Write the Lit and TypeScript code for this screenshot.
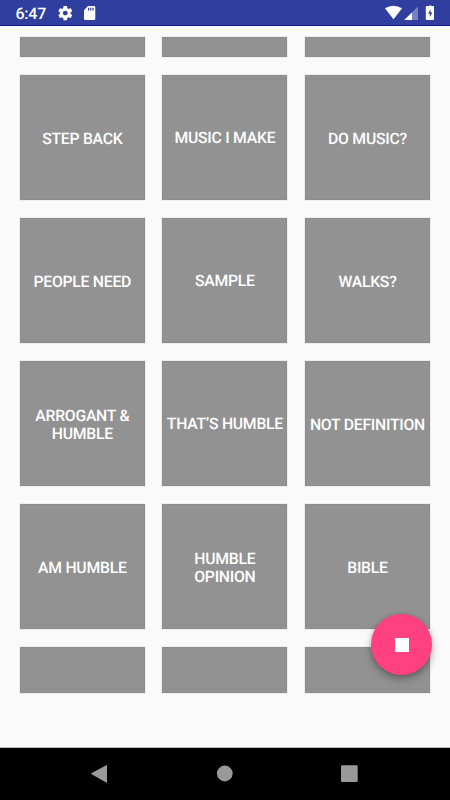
import { LitElement, html, css } from "lit";
import { customElement } from "lit/decorators.js";

const PADS = [
  ["STEP BACK", "MUSIC I MAKE", "DO MUSIC?"],
  ["PEOPLE NEED", "SAMPLE", "WALKS?"],
  ["ARROGANT & HUMBLE", "THAT’S HUMBLE", "NOT DEFINITION"],
  ["AM HUMBLE", "HUMBLE OPINION", "BIBLE"],
];

@customElement("status-bar")
class StatusBar extends LitElement {
  static styles = css`
    :host {
      display: flex;
      box-sizing: border-box;
      height: 26px;
      flex: none;
      background: #303f9f;
      border-bottom: 1px solid #0d1486;
      color: #fff;
      font: 500 16px/26px Roboto, sans-serif;
      letter-spacing: -0.25px;
      text-rendering: geometricPrecision;
      padding: 0 14px 0 15.500px;
      justify-content: space-between;
    }
    .group { display: flex; height: 26px; }
    .time { width: 41.500px; padding-top: 1px; white-space: nowrap; }
    svg { display: block; fill: #fff; }
  `;
  render() {
    return html`
      <div class="group">
        <span class="time">6:47</span>
        <svg width="40" height="26" viewBox="57 0 40 26">
          <path
            transform="translate(56.75 4.6) scale(.71)"
            d="M19.43 12.98c.04-.32.07-.64.07-.98s-.03-.66-.07-.98l2.11-1.65c.19-.15.24-.42.12-.64l-2-3.46c-.12-.22-.39-.3-.61-.22l-2.49 1c-.52-.4-1.08-.73-1.69-.98l-.38-2.65A.488.488 0 0 0 14 2h-4c-.25 0-.46.18-.49.42l-.38 2.65c-.61.25-1.17.59-1.69.98l-2.49-1c-.23-.09-.49 0-.61.22l-2 3.46c-.13.22-.07.49.12.64l2.11 1.65c-.04.32-.07.65-.07.98s.03.66.07.98l-2.11 1.65c-.19.15-.24.42-.12.64l2 3.46c.12.22.39.3.61.22l2.49-1c.52.4 1.08.73 1.69.98l.38 2.65c.03.24.24.42.49.42h4c.25 0 .46-.18.49-.42l.38-2.65c.61-.25 1.17-.59 1.69-.98l2.49 1c.23.09.49 0 .61-.22l2-3.46c.12-.22.07-.49-.12-.64l-2.11-1.65zM12 15.5A3.5 3.5 0 1 1 12 8.500a3.500 3.500 0 0 1 0 7z"
          />
          <path
            fill-rule="evenodd"
            d="M88 6h6a1.300 1.300 0 0 1 1.300 1.300v11.400a1.300 1.300 0 0 1-1.300 1.300H85.300a1.300 1.300 0 0 1-1.300-1.300V10.200zM88 7.800v2.700h1.200V7.800zM90.200 7.800v2.700h1.200V7.800zM92.400 7.800v2.700h1.200V7.800z"
          />
        </svg>
      </div>
      <svg width="52" height="26" viewBox="384 0 52 26">
        <path d="M384.900 8.300Q393.500 3.200 402.100 8.300L393.500 19.300z" />
        <path d="M418 6.500V20H404.300z" opacity=".35" />
        <path d="M412 12.400V20H404.300z" />
        <path
          fill-rule="evenodd"
          d="M428 6h1v-.600h2.200v.600h1.800a1 1 0 0 1 1 1v12a1 1 0 0 1-1 1h-6.200a1 1 0 0 1-1-1V7a1 1 0 0 1 1-1zM430.600 9.500l-2.500 4.200h1.700v3.300l2.600-4.400h-1.800z"
        />
      </svg>
    `;
  }
}

@customElement("app-root")
class AppRoot extends LitElement {
  static styles = css`
    :host {
      display: flex;
      flex-direction: column;
      position: relative;
      height: 800px;
      overflow: hidden;
      background: #fafafa;
      font-family: Roboto, sans-serif;
    }
    .grid {
      flex: 1;
      display: grid;
      grid-template-columns: repeat(3, 125px);
      grid-template-rows: 20px repeat(4, 125px) 46px;
      column-gap: 17.600px;
      row-gap: 18px;
      padding: 11px 0 0 19.800px;
    }
    .pad {
      display: flex;
      align-items: center;
      justify-content: center;
      box-sizing: border-box;
      padding: 2px 4px 0;
      background: #929292;
      box-shadow: inset 0 0 0 1px #8c8c8c, 0 0 0 1px #efefef;
      color: #fff;
      font-size: 15.750px;
      font-weight: 500;
      letter-spacing: -0.25px;
      line-height: 18px;
      text-align: center;
      text-rendering: geometricPrecision;
    }
    .pad:nth-child(3n + 2):not(:nth-child(14)) { padding-top: 1px; }
    .stop {
      position: absolute;
      left: 371px;
      top: 614px;
      width: 61.400px;
      height: 61.400px;
      border-radius: 50%;
      background: #ff4081;
      box-shadow: 0 4px 8px rgba(0, 0, 0, 0.3), 0 1px 4px rgba(0, 0, 0, 0.12);
      display: flex;
      align-items: center;
      justify-content: center;
    }
    .stop svg { display: block; fill: #fff; }
    .nav {
      height: 52px;
      flex: none;
      background: #000;
      box-shadow: 0 -1px #b9b9b9;
    }
    .nav svg { display: block; fill: #999; }
  `;
  render() {
    const edge = [0, 1, 2].map(() => html`<div class="pad"></div>`);
    return html`
      <status-bar></status-bar>
      <div class="grid">
        ${edge}
        ${PADS.flat().map((t) => html`<div class="pad"><span>${t}</span></div>`)}
        ${edge}
      </div>
      <div class="stop">
        <svg width="14" height="14" viewBox="0 0 14 14"><path d="M0 0h14v14H0z" /></svg>
      </div>
      <div class="nav">
        <svg width="450" height="52" viewBox="0 748 450 52">
          <path d="M91.300 773.300 106.200 765.200Q107 764.800 107 765.700V782Q107 783 106.200 782.500L91.300 774.100Q90.800 773.700 91.300 773.300z" />
          <circle cx="224.800" cy="773.500" r="7.900" />
          <rect x="341" y="765.200" width="16.700" height="16.700" rx="1.200" />
        </svg>
      </div>
    `;
  }
}
